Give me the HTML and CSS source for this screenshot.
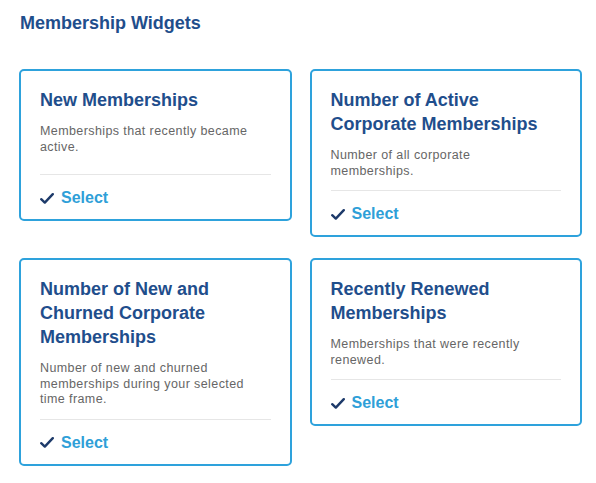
FILE: index.html
```html
<!DOCTYPE html>
<html lang="en">
<head>
<meta charset="utf-8">
<title>Membership Widgets</title>
<link rel="stylesheet" href="styles.css">
</head>
<body>
<main class="page">
  <h1 class="page-title">Membership Widgets</h1>
  <div class="widget-grid">
    <section class="card">
      <div class="card-body">
        <h2 class="card-title">New Memberships</h2>
        <p class="card-desc">Memberships that recently became active.</p>
      </div>
      <div class="card-footer">
        <button class="select-btn" type="button">
          <svg class="check" viewBox="0 0 14 11" width="14" height="11" aria-hidden="true"><path d="M1.2 6.2 L4.8 9.6 L12.8 1.2" fill="none" stroke="#1d3a6a" stroke-width="2.4" stroke-linecap="round" stroke-linejoin="round"/></svg>
          <span>Select</span>
        </button>
      </div>
    </section>
    <section class="card">
      <div class="card-body">
        <h2 class="card-title">Number of Active Corporate Memberships</h2>
        <p class="card-desc">Number of all corporate memberships.</p>
      </div>
      <div class="card-footer">
        <button class="select-btn" type="button">
          <svg class="check" viewBox="0 0 14 11" width="14" height="11" aria-hidden="true"><path d="M1.2 6.2 L4.8 9.6 L12.8 1.2" fill="none" stroke="#1d3a6a" stroke-width="2.4" stroke-linecap="round" stroke-linejoin="round"/></svg>
          <span>Select</span>
        </button>
      </div>
    </section>
    <section class="card">
      <div class="card-body">
        <h2 class="card-title">Number of New and Churned Corporate Memberships</h2>
        <p class="card-desc">Number of new and churned memberships during your selected time frame.</p>
      </div>
      <div class="card-footer">
        <button class="select-btn" type="button">
          <svg class="check" viewBox="0 0 14 11" width="14" height="11" aria-hidden="true"><path d="M1.2 6.2 L4.8 9.6 L12.8 1.2" fill="none" stroke="#1d3a6a" stroke-width="2.4" stroke-linecap="round" stroke-linejoin="round"/></svg>
          <span>Select</span>
        </button>
      </div>
    </section>
    <section class="card">
      <div class="card-body">
        <h2 class="card-title">Recently Renewed Memberships</h2>
        <p class="card-desc">Memberships that were recently renewed.</p>
      </div>
      <div class="card-footer">
        <button class="select-btn" type="button">
          <svg class="check" viewBox="0 0 14 11" width="14" height="11" aria-hidden="true"><path d="M1.2 6.2 L4.8 9.6 L12.8 1.2" fill="none" stroke="#1d3a6a" stroke-width="2.4" stroke-linecap="round" stroke-linejoin="round"/></svg>
          <span>Select</span>
        </button>
      </div>
    </section>
  </div>
</main>
</body>
</html>
```

FILE: styles.css
```css
* { box-sizing: border-box; }

html, body {
  margin: 0;
  padding: 0;
  background: #ffffff;
}

body {
  font-family: "Liberation Sans", Arial, Helvetica, sans-serif;
  color: #1f4e8c;
}

.page {
  padding: 11px 14px 0 19px;
}

.page-title {
  margin: 0 0 0 1px;
  font-size: 18px;
  line-height: 24px;
  font-weight: 700;
  color: #1f4e8c;
}

.widget-grid {
  display: grid;
  grid-template-columns: 1fr 1fr;
  column-gap: 18px;
  row-gap: 21px;
  align-items: start;
  margin-top: 34px;
}

.card {
  border: 2px solid #2ea2dc;
  border-radius: 5px;
  background: #ffffff;
  padding: 17px 19px 0 19px;
}

.card-body {
  min-height: 75px;
}

.card-title {
  margin: 0;
  font-size: 18px;
  line-height: 24px;
  font-weight: 700;
  color: #1f4e8c;
}

.card-desc {
  margin: 12px 0 0 0;
  max-width: 215px;
  font-size: 12.5px;
  line-height: 15.5px;
  letter-spacing: 0.4px;
  color: #666666;
}

.card-footer {
  margin-top: 11px;
  border-top: 1px solid #e6e6e6;
  padding: 13px 0 11px 0;
}

.select-btn {
  display: flex;
  align-items: center;
  gap: 7px;
  padding: 0;
  border: 0;
  background: none;
  font-family: inherit;
  font-size: 16px;
  line-height: 20px;
  font-weight: 700;
  color: #2f9fd8;
  cursor: pointer;
}

.check {
  display: block;
  flex: none;
}
```
